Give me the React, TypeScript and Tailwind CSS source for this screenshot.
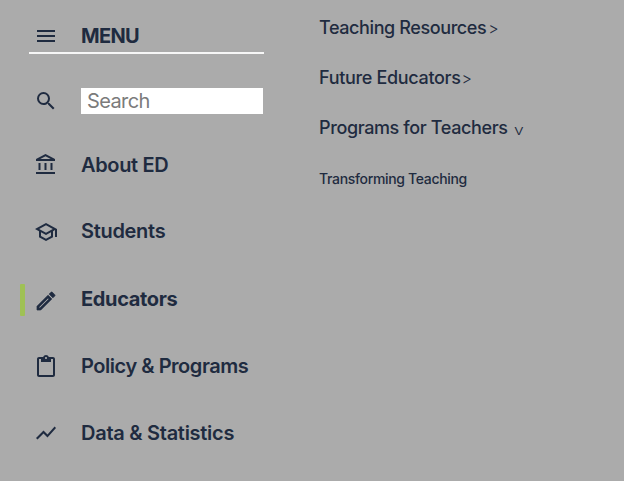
import { MdMenu, MdSearch, MdOutlineAccountBalance, MdOutlineSchool, MdOutlineCreate, MdContentPaste, MdShowChart } from "react-icons/md";

const items = [
  { label: "About ED", Icon: MdOutlineAccountBalance, h: "h-[66px]", t: "tracking-[-0.35px]", icon: "" },
  { label: "Students", Icon: MdOutlineSchool, h: "h-[67px]", t: "tracking-[-0.3px] pb-0.5", icon: "" },
  { label: "Educators", Icon: MdOutlineCreate, h: "h-[68px]", t: "tracking-[-0.35px]", icon: "mt-[3px] [&_path:last-child]:stroke-current [&_path:last-child]:stroke-[0.7px]", active: true },
  { label: "Policy & Programs", Icon: MdContentPaste, h: "h-[67px]", t: "tracking-[-0.46px] pb-0.5", icon: "" },
  { label: "Data & Statistics", Icon: MdShowChart, h: "h-[67px]", t: "tracking-[-0.27px] pb-0.5", icon: "mb-0.5" },
];

export default function App() {
  return (
    <div className="flex h-[481px] w-[624px] overflow-hidden bg-[#ababab] font-['Inter',sans-serif] text-[#1f2b40]">
      <nav className="w-[300px] shrink-0 pl-5">
        <div className="ml-[9px] flex h-[54px] w-[235px] items-center border-b-2 border-[#f7f7f7] pt-[20px] pl-[5px]">
          <MdMenu size={24} />
          <span className="ml-[23px] text-[20px] font-bold tracking-[-0.65px]">MENU</span>
        </div>
        <div className="mt-[34px] flex h-[26px] items-center pl-[14px]">
          <MdSearch size={24} />
          <input aria-label="Search" placeholder="Search" className="ml-[23px] h-[26px] w-[182px] bg-white px-1.5 text-[20px] tracking-[-0.6px] outline-none placeholder:text-[#7b7b7b]" />
        </div>
        <div className="mt-[18px]">
          {items.map(({ label, Icon, h, t, icon, active }) => (
            <div key={label} className={`flex items-center ${h}`}>
              <span className={`mt-0.5 h-8 w-[5px] rounded-[1px] ${active ? "bg-[#9fc155]" : ""}`} />
              <Icon size={24} className={`ml-[9px] ${icon}`} />
              <span className={`ml-[23px] text-[20px] whitespace-nowrap ${t} ${active ? "font-bold" : "font-semibold"}`}>{label}</span>
            </div>
          ))}
        </div>
      </nav>
      <section className="pt-[2px] pl-[19px] text-[18px] font-medium">
        <div className="flex h-[50px] items-center tracking-[-0.4px]">
          Teaching Resources<span className="ml-[2px] pt-[2px] text-[16px] font-light">&gt;</span>
        </div>
        <div className="flex h-[50px] items-center tracking-[-0.33px]">
          Future Educators<span className="ml-px pt-[2px] text-[16px] font-light">&gt;</span>
        </div>
        <div className="flex h-[50px] items-center tracking-[-0.38px]">
          Programs for Teachers<span className="ml-[7px] origin-center scale-x-125 pt-[4px] text-[14px] font-light tracking-normal">v</span>
        </div>
        <div className="flex h-[52px] items-center text-[14px] tracking-[-0.33px]">Transforming Teaching</div>
      </section>
    </div>
  );
}
